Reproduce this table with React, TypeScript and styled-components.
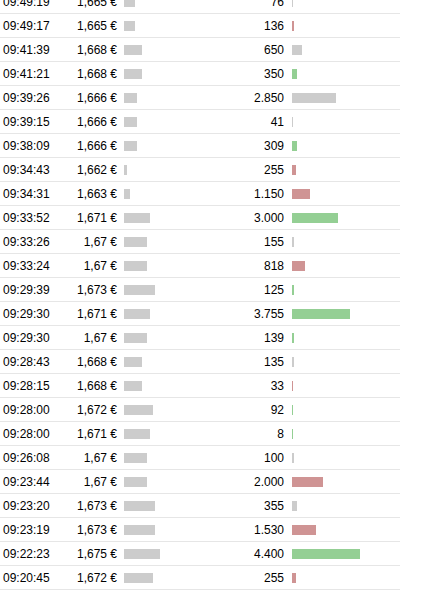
import React from "react";
import styled, { createGlobalStyle } from "styled-components";

type TSide = "buy" | "sell" | "none";

interface ITrade {
  time: string;
  price: number;
  volume: number;
  side: TSide;
}

const trades: ITrade[] = [
  { time: "09:49:19", price: 1.665, volume: 76, side: "none" },
  { time: "09:49:17", price: 1.665, volume: 136, side: "sell" },
  { time: "09:41:39", price: 1.668, volume: 650, side: "none" },
  { time: "09:41:21", price: 1.668, volume: 350, side: "buy" },
  { time: "09:39:26", price: 1.666, volume: 2850, side: "none" },
  { time: "09:39:15", price: 1.666, volume: 41, side: "none" },
  { time: "09:38:09", price: 1.666, volume: 309, side: "buy" },
  { time: "09:34:43", price: 1.662, volume: 255, side: "sell" },
  { time: "09:34:31", price: 1.663, volume: 1150, side: "sell" },
  { time: "09:33:52", price: 1.671, volume: 3000, side: "buy" },
  { time: "09:33:26", price: 1.67, volume: 155, side: "none" },
  { time: "09:33:24", price: 1.67, volume: 818, side: "sell" },
  { time: "09:29:39", price: 1.673, volume: 125, side: "buy" },
  { time: "09:29:30", price: 1.671, volume: 3755, side: "buy" },
  { time: "09:29:30", price: 1.67, volume: 139, side: "buy" },
  { time: "09:28:43", price: 1.668, volume: 135, side: "none" },
  { time: "09:28:15", price: 1.668, volume: 33, side: "sell" },
  { time: "09:28:00", price: 1.672, volume: 92, side: "buy" },
  { time: "09:28:00", price: 1.671, volume: 8, side: "buy" },
  { time: "09:26:08", price: 1.67, volume: 100, side: "none" },
  { time: "09:23:44", price: 1.67, volume: 2000, side: "sell" },
  { time: "09:23:20", price: 1.673, volume: 355, side: "none" },
  { time: "09:23:19", price: 1.673, volume: 1530, side: "sell" },
  { time: "09:22:23", price: 1.675, volume: 4400, side: "buy" },
  { time: "09:20:45", price: 1.672, volume: 255, side: "sell" },
];

const sideColor: Record<TSide, string> = {
  buy: "#94cf94",
  sell: "#cf9494",
  none: "#cccccc",
};

// 1,665 €
const formatPrice = (price: number) => `${String(price).replace(".", ",")} €`;

// 2.850
const formatVolume = (volume: number) =>
  String(volume).replace(/\B(?=(\d{3})+(?!\d))/g, ".");

const priceBarWidth = (price: number) =>
  Math.max(1, Math.round(3 + (price - 1.662) * 2550));

const volumeBarWidth = (volume: number) =>
  Math.max(1, Math.round((volume / 4400) * 68));

export default function App() {
  return (
    <>
      <GlobalStyle />
      <S.Table>
        {trades.map((trade, index) => (
          <TradeRow key={index} trade={trade} />
        ))}
      </S.Table>
    </>
  );
}

interface ITradeRow {
  trade: ITrade;
}

function TradeRow({ trade }: ITradeRow) {
  return (
    <S.Row>
      <S.Time>{trade.time}</S.Time>
      <S.Price>{formatPrice(trade.price)}</S.Price>
      <S.BarCell>
        <S.Bar $color={sideColor.none} style={{ width: priceBarWidth(trade.price) }} />
      </S.BarCell>
      <S.Volume>{formatVolume(trade.volume)}</S.Volume>
      <S.BarCell $grow>
        <S.Bar $color={sideColor[trade.side]} style={{ width: volumeBarWidth(trade.volume) }} />
      </S.BarCell>
    </S.Row>
  );
}

const GlobalStyle = createGlobalStyle`
  html, body {
    margin: 0;
    padding: 0;
    background: #ffffff;
    overflow: hidden;
  }
  body {
    font-family: "Liberation Sans", Arial, sans-serif;
    font-size: 12px;
    color: #000000;
  }
`;

const S = {
  Table: styled.div`
    width: 400px;
    margin-top: -10px;
    display: flex;
    flex-direction: column;
  `,
  Row: styled.div`
    height: 23px;
    display: flex;
    align-items: center;
    padding-left: 3px;
    border-bottom: 1px solid #e6e6e6;
  `,
  Time: styled.div`
    width: 60px;
  `,
  Price: styled.div`
    width: 54px;
    text-align: right;
  `,
  BarCell: styled.div<{ $grow?: boolean }>`
    display: flex;
    align-items: center;
    width: ${(p) => (p.$grow ? "auto" : "100px")};
    flex: ${(p) => (p.$grow ? "1" : "none")};
    margin-left: ${(p) => (p.$grow ? "8px" : "7px")};
  `,
  Bar: styled.div<{ $color: string }>`
    height: 10px;
    margin-top: 1px;
    background: ${(p) => p.$color};
  `,
  Volume: styled.div`
    width: 60px;
    text-align: right;
  `,
};
